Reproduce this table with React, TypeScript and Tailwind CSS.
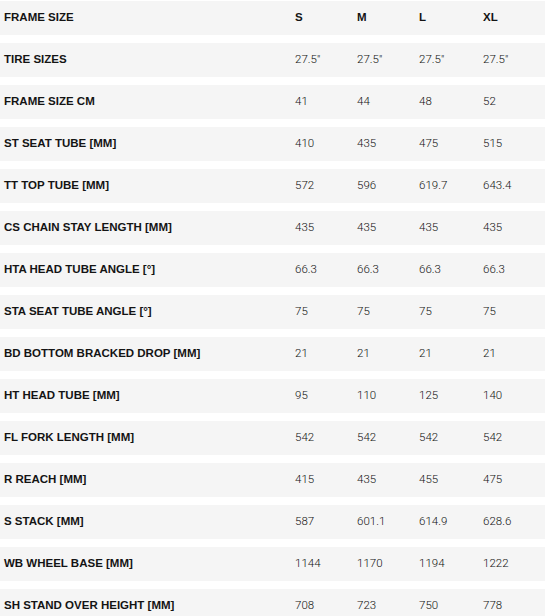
import React from "react";

const rows: [string, string[]][] = [
  ["FRAME SIZE", ["S", "M", "L", "XL"]],
  ["TIRE SIZES", ["27.5\"", "27.5\"", "27.5\"", "27.5\""]],
  ["FRAME SIZE CM", ["41", "44", "48", "52"]],
  ["ST SEAT TUBE [MM]", ["410", "435", "475", "515"]],
  ["TT TOP TUBE [MM]", ["572", "596", "619.7", "643.4"]],
  ["CS CHAIN STAY LENGTH [MM]", ["435", "435", "435", "435"]],
  ["HTA HEAD TUBE ANGLE [°]", ["66.3", "66.3", "66.3", "66.3"]],
  ["STA SEAT TUBE ANGLE [°]", ["75", "75", "75", "75"]],
  ["BD BOTTOM BRACKED DROP [MM]", ["21", "21", "21", "21"]],
  ["HT HEAD TUBE [MM]", ["95", "110", "125", "140"]],
  ["FL FORK LENGTH [MM]", ["542", "542", "542", "542"]],
  ["R REACH [MM]", ["415", "435", "455", "475"]],
  ["S STACK [MM]", ["587", "601.1", "614.9", "628.6"]],
  ["WB WHEEL BASE [MM]", ["1144", "1170", "1194", "1222"]],
  ["SH STAND OVER HEIGHT [MM]", ["708", "723", "750", "778"]],
];

export default function App() {
  return (
    <div className="w-[545px] h-[616px] overflow-hidden bg-white pt-px flex flex-col gap-2 text-[#141414]">
      {rows.map(([label, vals], i) => (
        <div
          key={i}
          className="shrink-0 h-[34px] bg-[#f5f5f5] grid grid-cols-[295px_62px_62px_64px_1fr] items-center"
        >
          <div
            className="pl-1 text-[11.5px] font-bold"
            style={{ fontFamily: '"Liberation Sans", Arial, sans-serif' }}
          >
            {label}
          </div>
          {vals.map((v, j) => (
            <div
              key={j}
              className={
                i === 0
                  ? "text-[11.5px] font-bold"
                  : "text-[11.5px] font-light text-[#111]"
              }
              style={{
                fontFamily:
                  i === 0
                    ? '"Liberation Sans", Arial, sans-serif'
                    : 'Roboto, "Liberation Sans", sans-serif',
              }}
            >
              {v}
            </div>
          ))}
        </div>
      ))}
    </div>
  );
}
